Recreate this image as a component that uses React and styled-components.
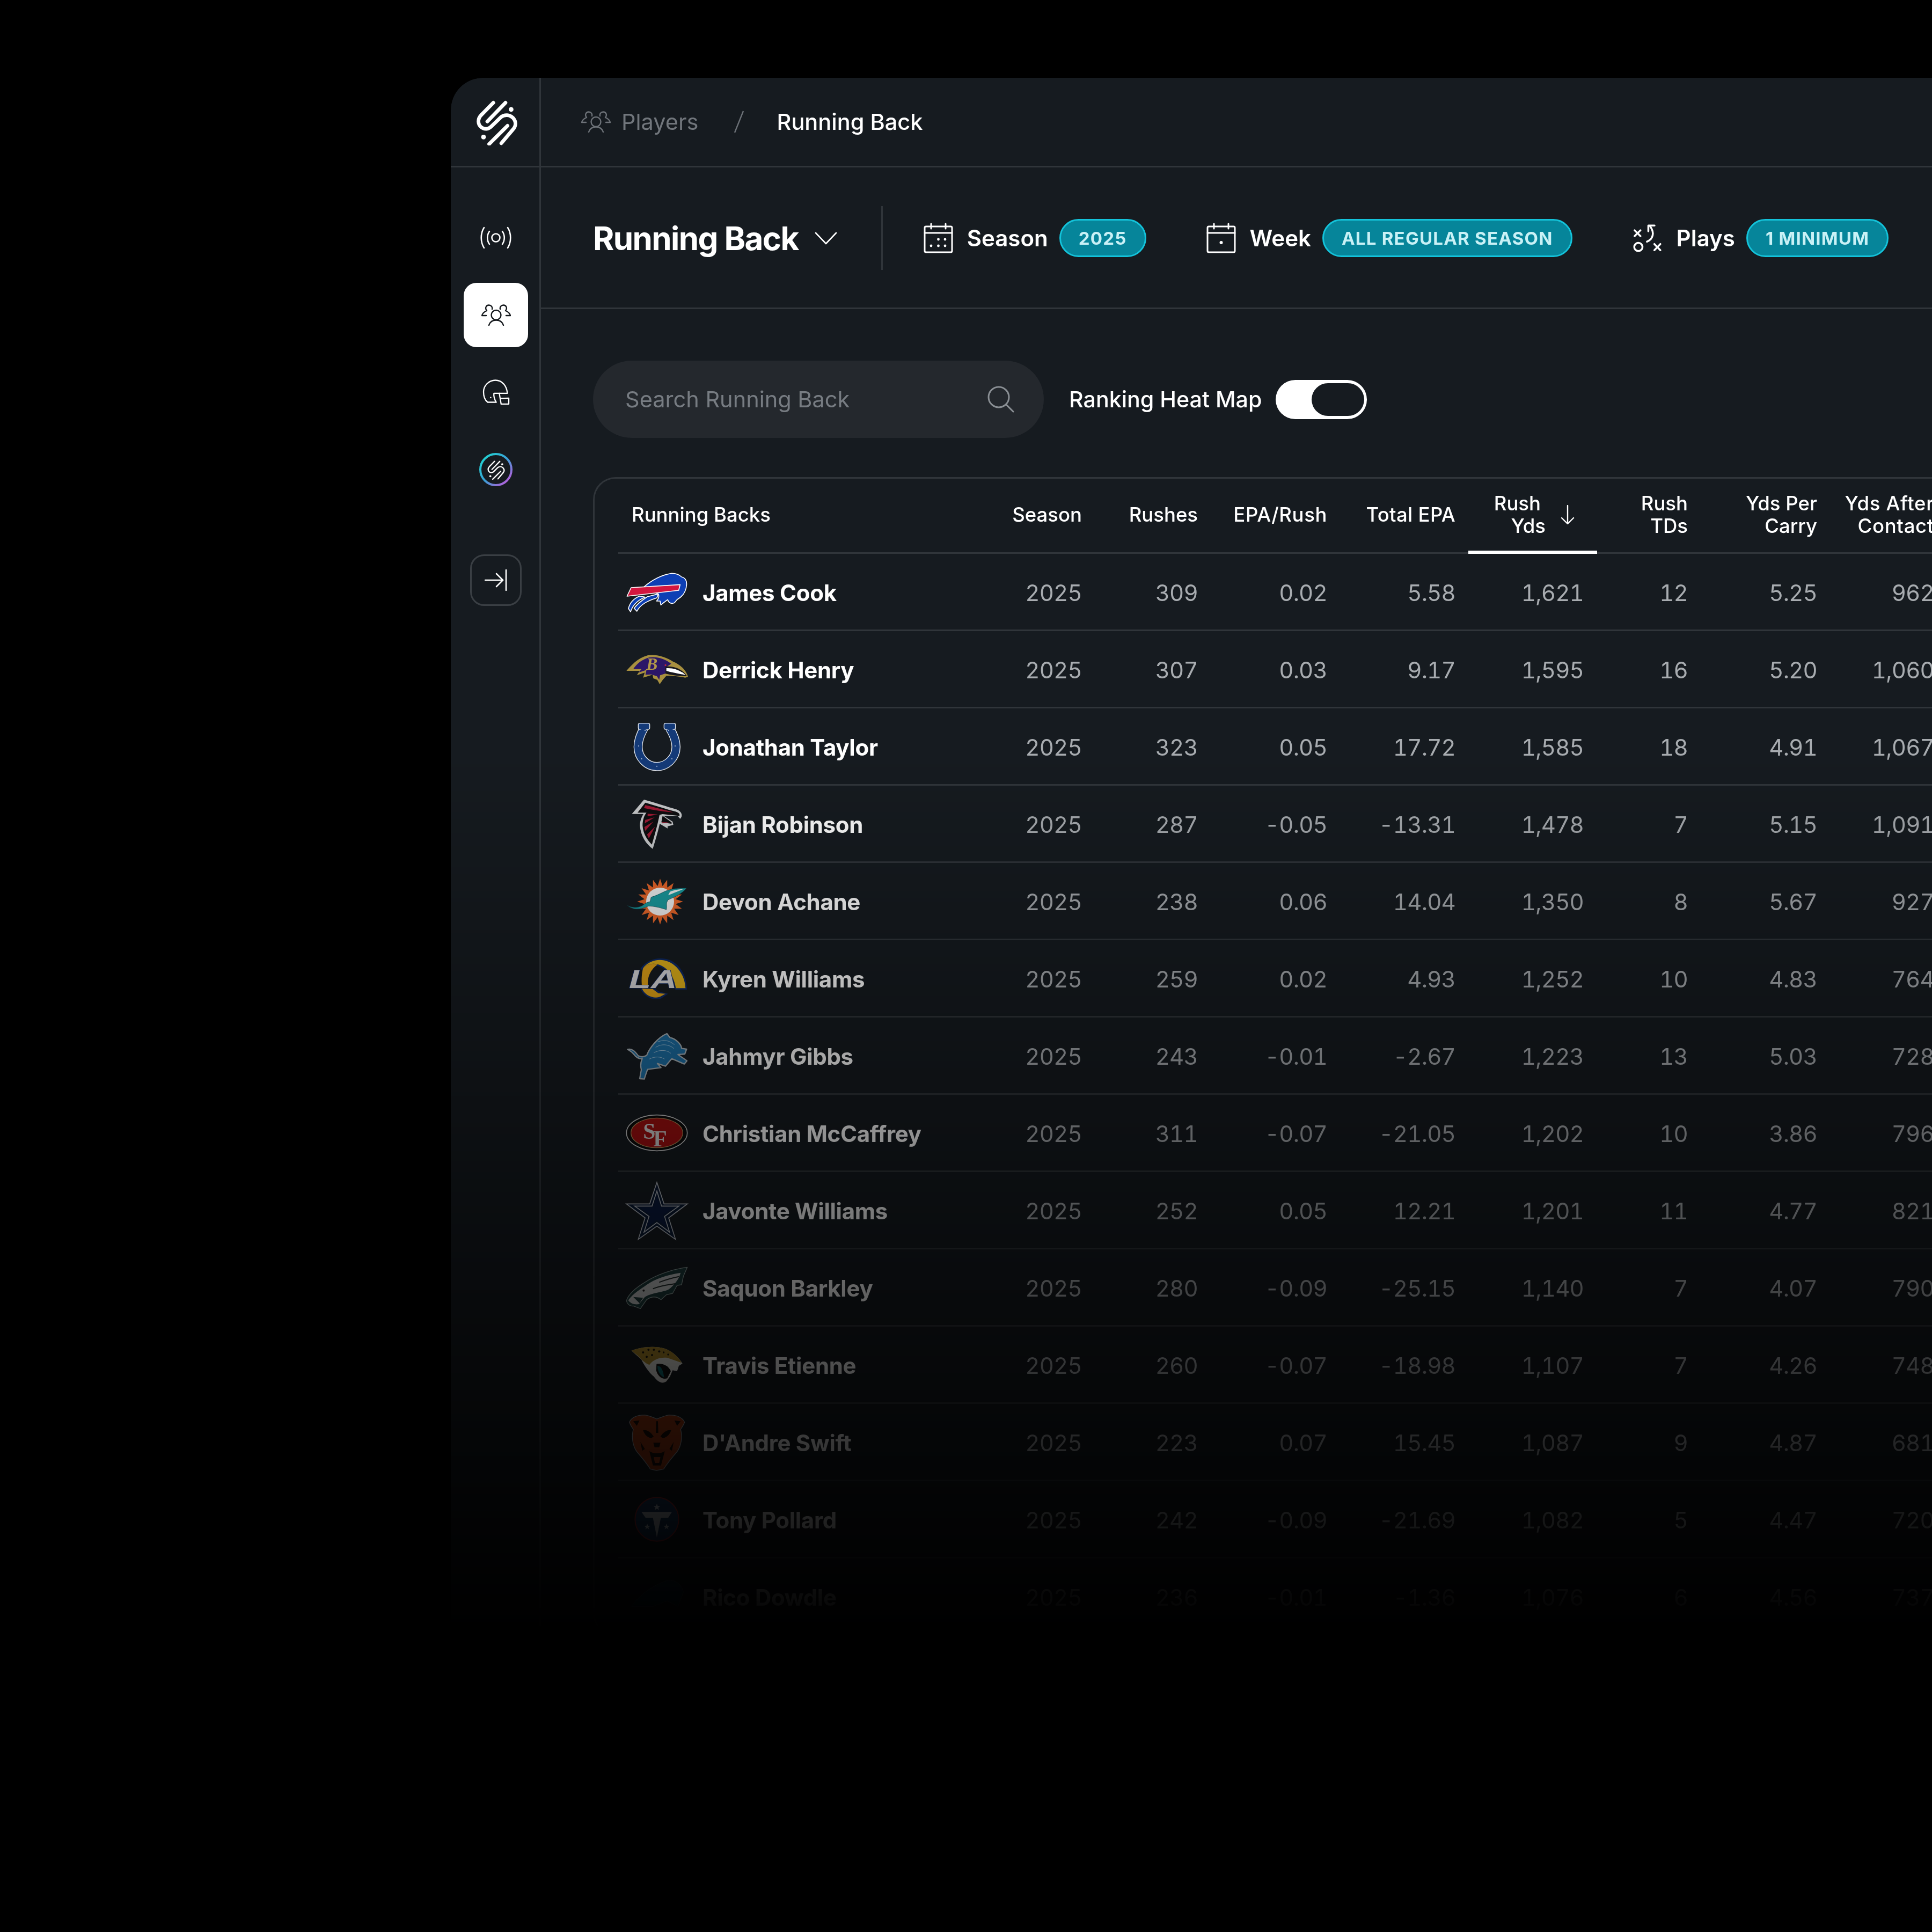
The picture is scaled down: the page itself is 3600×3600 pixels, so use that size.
import styled, { createGlobalStyle } from "styled-components";

const GlobalStyle = createGlobalStyle`
  html, body {
    margin: 0;
    padding: 0;
    background: #000;
  }
  body {
    font-family: Inter, "Liberation Sans", sans-serif;
  }
`;

const Page = styled.div`
  width: 3600px;
  height: 3600px;
  background: #000;
  padding: 145px 0 0 840px;
  box-sizing: border-box;
  overflow: hidden;
`;

const Panel = styled.div`
  display: flex;
  width: 2760px;
  height: 2900px;
  background: #161b20;
  border-top-left-radius: 60px;
  overflow: hidden;
  mask-image: linear-gradient(
    to bottom,
    #000 0,
    #000 1255px,
    transparent 2900px
  );
`;

const Rail = styled.aside`
  flex: 0 0 168px;
  box-sizing: border-box;
  border-right: 3px solid #30353a;
  display: flex;
  flex-direction: column;
`;

const RailLogo = styled.div`
  flex: none;
  height: 167px;
  box-sizing: border-box;
  border-bottom: 3px solid #30353a;
  display: flex;
  align-items: center;
  justify-content: center;
  padding-left: 4px;
`;

const RailNav = styled.nav`
  display: flex;
  flex-direction: column;
  align-items: center;
  gap: 24px;
  padding: 71px 0 0 3px;
`;

const NavSlot = styled.div`
  width: 120px;
  height: 120px;
  border-radius: 24px;
  display: flex;
  align-items: center;
  justify-content: center;
  background: ${(p) => (p.$active ? "#fff" : "transparent")};
  color: ${(p) => (p.$active ? "#14181c" : "#fff")};
`;

const CollapseButton = styled.div`
  width: 96px;
  height: 96px;
  margin-top: 74px;
  box-sizing: border-box;
  border: 3px solid #3a3f44;
  border-radius: 26px;
  display: flex;
  align-items: center;
  justify-content: center;
`;

const Main = styled.main`
  flex: 1;
  min-width: 0;
  display: flex;
  flex-direction: column;
`;

const Breadcrumb = styled.header`
  flex: none;
  height: 167px;
  box-sizing: border-box;
  border-bottom: 3px solid #30353a;
  display: flex;
  align-items: center;
  padding-left: 75px;
  font-size: 41.5px;
`;

const CrumbMuted = styled.span`
  color: #71767c;
  margin-left: 20px;
`;

const CrumbSlash = styled.span`
  width: 20px;
  height: 42px;
  margin: 0 61px 0 65px;
  display: flex;
`;

const CrumbCurrent = styled.span`
  color: #fff;
  font-weight: 500;
`;

const FilterBar = styled.div`
  flex: none;
  height: 264px;
  box-sizing: border-box;
  border-bottom: 3px solid #30353a;
  display: flex;
  align-items: center;
  padding: 2px 0 0 97px;
`;

const Title = styled.h1`
  margin: 0;
  font-size: 60px;
  font-weight: 700;
  letter-spacing: -1.6px;
  color: #fff;
`;

const Chevron = styled.svg`
  margin-left: 30px;
`;

const FilterDivider = styled.div`
  width: 3px;
  height: 119px;
  margin: 0 76px 0 82px;
  background: #30353a;
`;

const FilterGroup = styled.div`
  display: flex;
  align-items: center;
  margin-left: ${(p) => p.$offset || 0}px;
`;

const FilterLabel = styled.span`
  margin: 0 21px 0 26px;
  font-size: 42px;
  font-weight: 600;
  color: #fff;
`;

const Pill = styled.span`
  display: flex;
  align-items: center;
  height: 71px;
  box-sizing: border-box;
  padding: 0 33px;
  border-radius: 36px;
  background: #06859a;
  border: 3px solid #14c3da;
  color: #c9f1f6;
  font-size: 33px;
  font-weight: 700;
  letter-spacing: 1.25px;
`;

const Tools = styled.div`
  flex: none;
  display: flex;
  align-items: center;
  padding: 96px 0 0 97px;
`;

const Search = styled.div`
  width: 840px;
  height: 144px;
  box-sizing: border-box;
  border-radius: 72px;
  background: #24282d;
  padding: 0 55px 0 60px;
  display: flex;
  align-items: center;
  justify-content: space-between;
  font-size: 41.5px;
  color: #777c82;
`;

const ToggleLabel = styled.span`
  margin: 0 26px 0 47px;
  font-size: 41.2px;
  font-weight: 500;
  color: #fff;
`;

const Toggle = styled.div`
  width: 170px;
  height: 73px;
  box-sizing: border-box;
  padding: 6px 5px;
  border-radius: 37px;
  background: #fff;
  display: flex;
  justify-content: flex-end;
`;

const ToggleKnob = styled.div`
  width: 98px;
  border-radius: 31px;
  background: #161b20;
`;

const Table = styled.section`
  flex: none;
  margin: 73px 0 0 97px;
  width: 2600px;
  box-sizing: border-box;
  padding-left: 44px;
  border: 3px solid #30353a;
  border-right: 0;
  border-bottom: 0;
  border-top-left-radius: 42px;
  border-bottom-left-radius: 42px;
`;

const columns = "640px 224px 216px 241px 239px 264px 169px 241px 218px";

const HeaderRow = styled.div`
  display: grid;
  grid-template-columns: ${columns};
  height: 140px;
  box-sizing: border-box;
  border-bottom: 3px solid #30353a;
  align-items: stretch;
`;

const HeaderCell = styled.div`
  display: flex;
  align-items: center;
  justify-content: flex-end;
  text-align: right;
  font-size: 36.5px;
  font-weight: 500;
  line-height: 42px;
  letter-spacing: ${(p) => p.$tracking || 0}px;
  color: #fff;
  white-space: nowrap;
  padding-bottom: 3px;
`;

const HeaderName = styled(HeaderCell)`
  justify-content: flex-start;
  padding-left: 25px;
`;

const SortCell = styled(HeaderCell)`
  position: relative;
  padding-right: 42px;
  &::after {
    content: "";
    position: absolute;
    right: 0;
    bottom: -3px;
    width: 240px;
    height: 6px;
    background: #fff;
  }
`;

const SortLabel = styled.div`
  display: flex;
  flex-direction: column;
  align-items: flex-end;
  margin-right: 28px;
`;

const SortFirstLine = styled.span`
  margin-right: 9px;
`;

const Row = styled.div`
  display: grid;
  grid-template-columns: ${columns};
  height: 144px;
  box-sizing: border-box;
  border-bottom: 3px solid #30353a;
  align-items: center;
`;

const PlayerCell = styled.div`
  display: flex;
  align-items: center;
  gap: 25px;
  padding-left: 12px;
`;

const LogoBox = styled.svg`
  width: 120px;
  height: 120px;
  flex: none;
`;

const PlayerName = styled.span`
  font-size: 42px;
  font-weight: 700;
  color: #fff;
  letter-spacing: -0.3px;
  white-space: nowrap;
  padding-top: 3px;
`;

const Value = styled.div`
  text-align: right;
  font-size: 42px;
  font-weight: 400;
  font-variant-numeric: tabular-nums;
  letter-spacing: -0.8px;
  color: #a8acb0;
  padding: 3px ${(p) => (p.$sorted ? 25 : 0)}px 0 0;
`;

const RailMark = ({ size = 88, viewBox = "15 20 240 260", color = "#fff" }) => (
  <svg width={size} height={size} viewBox={viewBox} fill="none">
    <g stroke={color} strokeWidth="20" strokeLinecap="round">
      <path d="M118 45 L52 112 C30 134 32 165 52 180 C70 194 92 190 106 176 L160 124 C180 108 208 110 226 128 C244 148 244 172 226 192 L162 268" />
      <path d="M185 45 L85 148" />
      <path d="M196 172 L95 272" />
    </g>
    <circle cx="216" cy="82" r="13" fill={color} />
    <circle cx="64" cy="234" r="13" fill={color} />
  </svg>
);

const BroadcastIcon = () => (
  <svg width="58" height="42" viewBox="0 0 58 42" fill="none" stroke="#fff" strokeWidth="2.6" strokeLinecap="round">
    <circle cx="29" cy="21" r="7.5" />
    <path d="M17 9 C12 16 12 26 17 33" />
    <path d="M41 9 C46 16 46 26 41 33" />
    <path d="M7 2 C0 13 0 29 7 40" />
    <path d="M51 2 C58 13 58 29 51 40" />
  </svg>
);

const UsersIcon = ({ width = 55, height = 40, color = "currentColor", weight = 2.4 }) => (
  <svg width={width} height={height} viewBox="0 0 55 40" fill="none" stroke={color} strokeWidth={weight} strokeLinecap="round" strokeLinejoin="round">
    <circle cx="27.5" cy="20" r="9" />
    <path d="M14 39 C16 33 21 29.5 27.5 29.5 C34 29.5 39 33 41 39" />
    <path d="M20 9 C21 5 18 1.5 14 1.5 C9 1.5 6 7 10 12 C5 14 2 17 1 21 H9" />
    <path d="M35 9 C34 5 37 1.5 41 1.5 C46 1.5 49 7 45 12 C50 14 53 17 54 21 H46" />
  </svg>
);

const HelmetIcon = () => (
  <svg width="55" height="52" viewBox="50 45 165 155" fill="none" stroke="#fff" strokeWidth="7" strokeLinejoin="round" strokeLinecap="round">
    <path d="M133 178 H85 C68 165 62 140 62 120 C62 85 92 55 128 55 C165 55 192 85 195 128 H120 C118 145 125 165 133 178 Z" />
    <path d="M150 128 L160 186" />
    <path d="M160 157 L203 155 V188 H160" />
    <circle cx="102" cy="152" r="4" fill="#fff" stroke="none" />
  </svg>
);

const GradientMark = () => (
  <svg width="64" height="64" viewBox="0 0 64 64" fill="none">
    <defs>
      <linearGradient id="ringGrad" x1="0.1" y1="0.1" x2="0.9" y2="0.9">
        <stop offset="0" stopColor="#22d3d3" />
        <stop offset="0.5" stopColor="#3a9fd6" />
        <stop offset="1" stopColor="#b65fdc" />
      </linearGradient>
    </defs>
    <circle cx="32" cy="32" r="29" stroke="url(#ringGrad)" strokeWidth="4" />
    <svg x="14" y="13" width="36" height="38" viewBox="15 20 240 260">
      <g stroke="#fff" strokeWidth="16" strokeLinecap="round" fill="none">
        <path d="M118 45 L52 112 C30 134 32 165 52 180 C70 194 92 190 106 176 L160 124 C180 108 208 110 226 128 C244 148 244 172 226 192 L162 268" />
        <path d="M185 45 L85 148" />
        <path d="M196 172 L95 272" />
      </g>
      <circle cx="216" cy="82" r="13" fill="#fff" />
      <circle cx="64" cy="234" r="13" fill="#fff" />
    </svg>
  </svg>
);

const CollapseIcon = () => (
  <svg width="42" height="40" viewBox="0 0 42 40" fill="none" stroke="#fff" strokeWidth="2.6" strokeLinecap="round" strokeLinejoin="round">
    <path d="M1 20 H34" />
    <path d="M22 8 L34 20 L22 32" />
    <path d="M40 1 V39" />
  </svg>
);

const CalendarIcon = ({ single }) => (
  <svg width="55" height="57" viewBox="0 0 55 57" fill="none" stroke="#fff" strokeWidth="3" strokeLinecap="round">
    <rect x="2" y="7" width="51" height="48" rx="2.5" />
    <path d="M2 19 H53" />
    <path d="M14 2 V11" />
    <path d="M41 2 V11" />
    {single ? (
      <circle cx="27.5" cy="37" r="3" fill="#fff" stroke="none" />
    ) : (
      <g fill="#fff" stroke="none">
        <circle cx="27.5" cy="31" r="2.4" />
        <circle cx="40" cy="31" r="2.4" />
        <circle cx="14" cy="43" r="2.4" />
        <circle cx="27.5" cy="43" r="2.4" />
        <circle cx="40" cy="43" r="2.4" />
      </g>
    )}
  </svg>
);

const PlaysIcon = () => (
  <svg width="56" height="56" viewBox="38 45 175 175" fill="none" stroke="#fff" strokeWidth="11" strokeLinecap="round" strokeLinejoin="round">
    <path d="M50 86 L84 120 M84 86 L50 120" />
    <circle cx="72" cy="183" r="24" />
    <path d="M165 166 L200 202 M200 166 L165 202" />
    <path d="M122 152 C158 138 168 100 140 62" />
    <path d="M166 58 H130 L130 92" />
  </svg>
);

const SearchIcon = () => (
  <svg width="50" height="50" viewBox="0 0 50 50" fill="none" stroke="#8a8f94" strokeWidth="3" strokeLinecap="round">
    <circle cx="21" cy="21" r="19" />
    <path d="M35 35 L48 48" />
  </svg>
);

const BillsLogo = () => (
  <LogoBox viewBox="102 9 360 360">
    <g stroke="#fff" strokeWidth="5" strokeLinejoin="round">
      <path fill="#0d3fb4" d="M205 165 C250 125 300 95 365 85 C395 85 410 95 420 105 C440 110 450 125 448 150 C445 190 425 215 395 232 L380 250 C362 258 348 250 342 232 L316 252 L304 262 L300 240 L280 240 C292 228 296 215 290 200 Z" />
      <path fill="#0d3fb4" d="M185 212 C155 225 130 250 123 282 L135 300 C145 265 170 238 215 218 Z" />
      <path fill="#0d3fb4" d="M228 216 C195 238 168 262 155 280 L170 297 C190 258 232 238 282 222 L290 200 Z" />
      <path fill="#d3163f" d="M115 213 L138 165 L412 148 L404 180 Z" />
    </g>
  </LogoBox>
);

const RavensLogo = () => (
  <LogoBox viewBox="102 441 360 360">
    <path fill="#a8903f" d="M112 630 C140 600 170 560 232 543 C285 535 335 555 372 578 C405 590 445 622 456 664 L440 668 C400 660 360 658 335 658 L315 680 L298 705 L284 680 L262 672 L258 652 L205 668 L214 640 L170 655 L186 630 Z" />
    <path fill="#2b1668" d="M150 620 C170 590 200 565 240 555 C285 548 330 565 362 590 L330 612 L330 645 L300 655 L295 680 L282 660 L250 650 L218 652 L224 625 L180 640 L196 620 Z" />
    <path fill="#16161c" d="M330 606 C380 600 430 625 450 660 C410 660 370 655 330 646 Z" />
    <path fill="#fff" d="M335 615 C375 612 420 630 442 654 C405 645 365 640 335 630 Z" />
    <circle cx="330" cy="598" r="5" fill="#c2253a" />
    <text x="222" y="625" fontFamily="Liberation Serif, serif" fontWeight="700" fontStyle="italic" fontSize="96" fill="#b2984a">B</text>
  </LogoBox>
);

const ColtsLogo = () => (
  <LogoBox viewBox="102 873 360 360">
    <g fill="none" strokeLinecap="butt">
      <path stroke="#e8ecf2" strokeWidth="50" d="M210 950 C190 985 177 1020 177 1055 C177 1115 225 1165 282 1165 C340 1165 389 1115 389 1055 C389 1020 375 985 353 950" />
      <path stroke="#143a78" strokeWidth="42" d="M210 950 C190 985 177 1020 177 1055 C177 1115 225 1165 282 1165 C340 1165 389 1115 389 1055 C389 1020 375 985 353 950" />
    </g>
    <g fill="#143a78" stroke="#e8ecf2" strokeWidth="4">
      <rect x="178" y="923" width="64" height="34" rx="9" />
      <rect x="322" y="923" width="64" height="34" rx="9" />
    </g>
    <path stroke="#143a78" strokeWidth="36" d="M210 952 L204 964 M353 952 L359 964" />
    <g fill="#c7d3e6">
      <circle cx="216" cy="963" r="3" /><circle cx="348" cy="963" r="3" />
      <circle cx="180" cy="1050" r="3" /><circle cx="384" cy="1050" r="3" />
      <circle cx="197" cy="1122" r="3" /><circle cx="366" cy="1122" r="3" />
      <circle cx="282" cy="1163" r="3" />
    </g>
  </LogoBox>
);

const FalconsLogo = () => (
  <LogoBox viewBox="0 0 360 360">
    <path fill="#c9cbcd" d="M40 125 L108 45 C170 62 240 85 290 100 C318 110 328 135 310 152 L296 136 L218 136 L268 168 L272 186 L240 194 L240 206 L196 180 C186 225 168 285 157 320 C120 295 90 250 85 190 C85 165 95 140 105 125 Z" />
    <path fill="#0e0e10" d="M72 118 L115 62 C170 78 240 100 285 112 C300 118 310 125 306 136 L212 126 L195 130 C185 180 170 235 152 296 C125 270 103 235 100 190 C100 160 108 135 122 118 Z" />
    <path fill="#0e0e10" d="M212 136 L262 172 L262 180 L205 172 Z" />
    <g fill="#a21a34">
      <path d="M115 76 C170 88 225 104 272 116 C220 112 165 104 108 92 Z" />
      <path d="M128 124 L185 128 L128 138 Z" />
      <path d="M115 158 L168 144 L112 178 Z" />
      <path d="M110 198 L160 168 L115 220 Z" />
      <path d="M125 240 L170 196 L135 262 Z" />
      <path d="M208 172 L248 172 L212 178 Z" />
    </g>
  </LogoBox>
);

const starPoints = (cx, cy, outer, inner, count) => {
  const points = [];
  for (let i = 0; i < count * 2; i++) {
    const r = i % 2 === 0 ? outer : inner;
    const a = (Math.PI * i) / count - Math.PI / 2;
    points.push(`${cx + r * Math.cos(a)},${cy + r * Math.sin(a)}`);
  }
  return points.join(" ");
};

const DolphinsLogo = () => (
  <LogoBox viewBox="102 237 360 360">
    <polygon fill="#e8662a" points={starPoints(300, 420, 128, 88, 20)} />
    <circle cx="300" cy="420" r="78" fill="#f2f2f2" />
    <path fill="#1a9ca0" stroke="#123f48" strokeWidth="2" d="M118 442 C150 470 195 465 235 445 C265 445 305 455 335 465 C340 445 330 430 345 410 C380 395 425 375 447 345 C410 345 380 345 350 355 C325 360 290 385 250 395 L244 420 C225 425 215 430 205 440 C175 458 140 455 118 442 Z" />
    <path fill="#eef3f3" d="M345 385 C370 375 400 362 430 350 C405 352 375 355 355 365 Z" />
  </LogoBox>
);

const RamsLogo = () => (
  <LogoBox viewBox="102 669 360 360">
    <path fill="#0f2a66" d="M190 795 C225 745 290 725 350 745 C410 770 448 830 450 912 L385 912 C375 850 340 790 285 780 C255 775 225 790 215 815 Z" />
    <path fill="#e2b21a" d="M205 792 C235 750 295 735 345 755 C400 778 438 835 442 904 L388 904 C380 845 345 785 285 770 C255 762 225 770 205 792 Z" />
    <path fill="#0f2a66" d="M190 905 C205 950 260 975 305 962 L345 935 L300 925 L265 905 Z" />
    <path fill="#e2a418" d="M200 908 C215 945 265 965 300 952 L330 935 L290 932 L258 908 Z" />
    <path fill="#e2a418" d="M205 792 C195 830 195 870 200 908 L235 905 C225 860 235 810 285 772 C255 762 225 770 205 792 Z" />
    <text x="126" y="904" fontFamily="Liberation Sans, sans-serif" fontWeight="700" fontStyle="italic" fontSize="146" textLength="268" lengthAdjust="spacingAndGlyphs" fill="#d8d8da" stroke="#0f2a66" strokeWidth="4" paintOrder="stroke">LA</text>
  </LogoBox>
);

const LionsLogo = () => (
  <LogoBox viewBox="102 1101 360 360">
    <path fill="#1d6fa5" stroke="#a9b2b8" strokeWidth="7" strokeLinejoin="round" d="M118 1246 C145 1240 160 1258 178 1282 C195 1290 205 1290 225 1280 C240 1240 285 1180 338 1158 L355 1180 C385 1185 418 1215 420 1240 L448 1245 L438 1272 L400 1275 L450 1310 L435 1328 L365 1298 L330 1340 L285 1325 L305 1348 L230 1358 C222 1380 215 1400 212 1412 L186 1410 L195 1360 C190 1340 190 1320 200 1298 C180 1300 165 1290 152 1272 C140 1258 128 1252 118 1246 Z" />
    <g fill="none" stroke="#9cc0d8" strokeWidth="3">
      <path d="M285 1205 C320 1190 350 1195 380 1220" />
      <path d="M275 1235 C310 1212 350 1218 378 1242" />
      <path d="M265 1265 C300 1245 340 1250 360 1268" />
      <path d="M240 1300 C270 1285 300 1285 325 1300" />
    </g>
  </LogoBox>
);

const NinersLogo = () => (
  <LogoBox viewBox="102 33 360 360">
    <ellipse cx="282" cy="213" rx="170" ry="100" fill="#0c0c0c" stroke="#cfcfcf" strokeWidth="5" />
    <ellipse cx="282" cy="213" rx="145" ry="83" fill="#a40f10" stroke="#b08a55" strokeWidth="4" />
    <text x="205" y="245" fontFamily="Liberation Serif, serif" fontWeight="700" fontSize="125" fill="#d6d6d6">S</text>
    <text x="262" y="288" fontFamily="Liberation Serif, serif" fontWeight="700" fontSize="125" fill="#d6d6d6">F</text>
  </LogoBox>
);

const CowboysLogo = () => (
  <LogoBox viewBox="102 465 360 360">
    <polygon fill="#0b1a33" stroke="#b7bcc4" strokeWidth="5" points="282,490 322,610 452,610 348,688 386,808 282,734 178,808 216,688 112,610 242,610" />
    <polygon fill="none" stroke="#b7bcc4" strokeWidth="5" points="282,538 308,622 405,622 325,680 353,768 282,714 210,768 238,680 158,622 255,622" />
    <polygon fill="#0a1a3e" points="282,560 302,628 382,628 318,672 340,742 282,700 224,742 246,672 182,628 262,628" />
  </LogoBox>
);

const EaglesLogo = () => (
  <LogoBox viewBox="102 897 360 360">
    <path fill="#1c3a3a" stroke="#8a9a98" strokeWidth="4" strokeLinejoin="round" d="M452 964 C370 975 280 1005 215 1048 C170 1075 125 1110 112 1150 C115 1170 135 1185 150 1180 L190 1195 L225 1145 C260 1120 285 1130 305 1145 L335 1118 L370 1110 L395 1065 L420 1062 L430 1015 Z" />
    <path fill="#c2c4c5" d="M415 995 C340 1005 270 1030 225 1062 C190 1088 150 1110 122 1148 C135 1168 160 1174 182 1170 L215 1130 C260 1105 310 1105 345 1090 C380 1065 405 1030 415 995 Z" />
    <path fill="none" stroke="#222b2a" strokeWidth="6" d="M295 1048 C340 1030 375 1022 405 1016 M260 1084 C310 1064 350 1062 385 1056" />
    <circle cx="208" cy="1094" r="6" fill="#222" />
    <path fill="#1c3a3a" d="M150 1130 L205 1135 L185 1165 Z" />
  </LogoBox>
);

const JaguarsLogo = () => (
  <LogoBox viewBox="102 -51 360 360">
    <path fill="#ecebe6" d="M140 50 C190 30 270 20 330 40 C370 55 405 90 425 122 L405 135 L395 165 L370 160 L355 195 L335 222 C310 240 285 222 265 195 C240 175 215 140 195 100 C175 80 155 65 140 50 Z" />
    <path fill="#b28d2a" d="M140 50 C190 30 270 20 330 40 C370 55 405 90 420 118 L340 90 C300 85 260 100 240 130 C215 120 190 95 175 78 Z" />
    <path fill="#111" d="M280 125 C310 120 345 130 360 165 L340 205 C310 215 285 190 278 160 Z" />
    <path fill="#0e6b6f" d="M285 135 C305 135 318 160 322 200 C300 190 285 165 285 135 Z" />
    <g fill="#1d1a10">
      <circle cx="205" cy="60" r="6" /><circle cx="235" cy="45" r="6" /><circle cx="265" cy="45" r="6" />
      <circle cx="295" cy="55" r="6" /><circle cx="225" cy="85" r="6" /><circle cx="255" cy="75" r="6" />
      <circle cx="320" cy="60" r="5" /><circle cx="345" cy="72" r="5" />
    </g>
  </LogoBox>
);

const BearsLogo = () => (
  <LogoBox viewBox="102 381 360 360">
    <path fill="#9c3712" stroke="#9aa0a8" strokeWidth="4" strokeLinejoin="round" d="M128 450 C140 425 170 410 215 410 C240 414 265 425 282 432 C300 425 325 414 350 410 C395 410 425 425 437 450 C430 470 422 478 415 490 C425 530 420 580 395 615 C365 650 340 680 320 712 L280 720 L245 712 C225 680 200 650 170 615 C145 580 140 530 150 490 C143 478 135 470 128 450 Z" />
    <g fill="#1a0d08">
      <path d="M205 495 C225 490 248 505 264 530 L250 540 C230 535 212 520 205 495 Z" />
      <path d="M362 495 C342 490 318 505 302 530 L316 540 C336 535 354 520 362 495 Z" />
      <path d="M278 445 L288 445 L290 510 L276 510 Z" />
      <path d="M150 445 L185 440 L170 470 Z" />
      <path d="M415 445 L380 440 L395 470 Z" />
      <path d="M262 565 H302 L295 590 H269 Z" />
      <path d="M240 612 C260 628 305 628 326 612 L305 692 H260 Z" />
      <path d="M190 560 L215 600 L200 610 Z" />
      <path d="M376 560 L352 600 L366 610 Z" />
    </g>
    <path fill="#9c3712" d="M264 645 L302 645 L295 678 L271 678 Z" />
  </LogoBox>
);

const TitansLogo = () => (
  <LogoBox viewBox="102 813 360 360">
    <circle cx="282" cy="993" r="122" fill="#1b3a63" stroke="#a5272c" strokeWidth="6" />
    <path fill="#c4cbd4" d="M196 952 H366 L345 985 H304 L282 1095 L260 985 H219 Z" />
    <polygon fill="#c4cbd4" points={starPoints(282, 925, 20, 8, 5)} />
    <polygon fill="#c4cbd4" points={starPoints(228, 1035, 18, 7, 5)} />
    <polygon fill="#c4cbd4" points={starPoints(336, 1035, 18, 7, 5)} />
  </LogoBox>
);

const PanthersLogo = () => (
  <LogoBox viewBox="102 1245 360 360">
    <path fill="#0a2f46" stroke="#4a5058" strokeWidth="3" d="M140 1480 C180 1420 260 1360 340 1335 C380 1330 420 1350 430 1400 L400 1480 L340 1450 L260 1480 Z" />
  </LogoBox>
);

const players = [
  { name: "James Cook", Logo: BillsLogo, stats: ["2025", "309", "0.02", "5.58", "1,621", "12", "5.25", "962"] },
  { name: "Derrick Henry", Logo: RavensLogo, stats: ["2025", "307", "0.03", "9.17", "1,595", "16", "5.20", "1,060"] },
  { name: "Jonathan Taylor", Logo: ColtsLogo, stats: ["2025", "323", "0.05", "17.72", "1,585", "18", "4.91", "1,067"] },
  { name: "Bijan Robinson", Logo: FalconsLogo, stats: ["2025", "287", "-0.05", "-13.31", "1,478", "7", "5.15", "1,091"] },
  { name: "Devon Achane", Logo: DolphinsLogo, stats: ["2025", "238", "0.06", "14.04", "1,350", "8", "5.67", "927"] },
  { name: "Kyren Williams", Logo: RamsLogo, stats: ["2025", "259", "0.02", "4.93", "1,252", "10", "4.83", "764"] },
  { name: "Jahmyr Gibbs", Logo: LionsLogo, stats: ["2025", "243", "-0.01", "-2.67", "1,223", "13", "5.03", "728"] },
  { name: "Christian McCaffrey", Logo: NinersLogo, stats: ["2025", "311", "-0.07", "-21.05", "1,202", "10", "3.86", "796"] },
  { name: "Javonte Williams", Logo: CowboysLogo, stats: ["2025", "252", "0.05", "12.21", "1,201", "11", "4.77", "821"] },
  { name: "Saquon Barkley", Logo: EaglesLogo, stats: ["2025", "280", "-0.09", "-25.15", "1,140", "7", "4.07", "790"] },
  { name: "Travis Etienne", Logo: JaguarsLogo, stats: ["2025", "260", "-0.07", "-18.98", "1,107", "7", "4.26", "748"] },
  { name: "D'Andre Swift", Logo: BearsLogo, stats: ["2025", "223", "0.07", "15.45", "1,087", "9", "4.87", "681"] },
  { name: "Tony Pollard", Logo: TitansLogo, stats: ["2025", "242", "-0.09", "-21.69", "1,082", "5", "4.47", "720"] },
  { name: "Rico Dowdle", Logo: PanthersLogo, stats: ["2025", "236", "-0.01", "-1.36", "1,076", "6", "4.56", "737"] },
];

const App = () => {
  return (
    <Page>
      <GlobalStyle />
      <Panel>
        <Rail>
          <RailLogo>
            <RailMark />
          </RailLogo>
          <RailNav>
            <NavSlot>
              <BroadcastIcon />
            </NavSlot>
            <NavSlot $active>
              <UsersIcon />
            </NavSlot>
            <NavSlot>
              <HelmetIcon />
            </NavSlot>
            <NavSlot>
              <GradientMark />
            </NavSlot>
            <CollapseButton>
              <CollapseIcon />
            </CollapseButton>
          </RailNav>
        </Rail>
        <Main>
          <Breadcrumb>
            <UsersIcon color="#6d7278" />
            <CrumbMuted>Players</CrumbMuted>
            <CrumbSlash>
              <svg width="20" height="42" viewBox="0 0 20 42" fill="none" stroke="#6d7278" strokeWidth="2.4">
                <path d="M18 1 L2 41" />
              </svg>
            </CrumbSlash>
            <CrumbCurrent>Running Back</CrumbCurrent>
          </Breadcrumb>
          <FilterBar>
            <Title>Running Back</Title>
            <Chevron width="42" height="24" viewBox="0 0 42 24" fill="none" stroke="#fff" strokeWidth="2.6" strokeLinecap="round" strokeLinejoin="round">
              <path d="M2 2 L21 22 L40 2" />
            </Chevron>
            <FilterDivider />
            <FilterGroup>
              <CalendarIcon />
              <FilterLabel>Season</FilterLabel>
              <Pill>2025</Pill>
            </FilterGroup>
            <FilterGroup $offset={112}>
              <CalendarIcon single />
              <FilterLabel>Week</FilterLabel>
              <Pill>ALL REGULAR SEASON</Pill>
            </FilterGroup>
            <FilterGroup $offset={112}>
              <PlaysIcon />
              <FilterLabel>Plays</FilterLabel>
              <Pill>1 MINIMUM</Pill>
            </FilterGroup>
          </FilterBar>
          <Tools>
            <Search>
              <span>Search Running Back</span>
              <SearchIcon />
            </Search>
            <ToggleLabel>Ranking Heat Map</ToggleLabel>
            <Toggle>
              <ToggleKnob />
            </Toggle>
          </Tools>
          <Table>
            <HeaderRow>
              <HeaderName>Running Backs</HeaderName>
              <HeaderCell>Season</HeaderCell>
              <HeaderCell>Rushes</HeaderCell>
              <HeaderCell $tracking={0.6}>EPA/Rush</HeaderCell>
              <HeaderCell $tracking={0.3}>Total EPA</HeaderCell>
              <SortCell>
                <SortLabel>
                  <SortFirstLine>Rush</SortFirstLine>
                  <span>Yds</span>
                </SortLabel>
                <svg width="26" height="36" viewBox="0 0 26 36" fill="none" stroke="#fff" strokeWidth="2.4" strokeLinecap="round" strokeLinejoin="round">
                  <path d="M13 1 V35" />
                  <path d="M2 24 L13 35 L24 24" />
                </svg>
              </SortCell>
              <HeaderCell>Rush<br />TDs</HeaderCell>
              <HeaderCell>Yds Per<br />Carry</HeaderCell>
              <HeaderCell $tracking={0.7}>Yds After<br />Contact</HeaderCell>
            </HeaderRow>
            {players.map(({ name, Logo, stats }) => (
              <Row key={name}>
                <PlayerCell>
                  <Logo />
                  <PlayerName>{name}</PlayerName>
                </PlayerCell>
                {stats.map((value, i) => (
                  <Value key={i} $sorted={i === 4}>{value}</Value>
                ))}
              </Row>
            ))}
          </Table>
        </Main>
      </Panel>
    </Page>
  );
};

export default App;
